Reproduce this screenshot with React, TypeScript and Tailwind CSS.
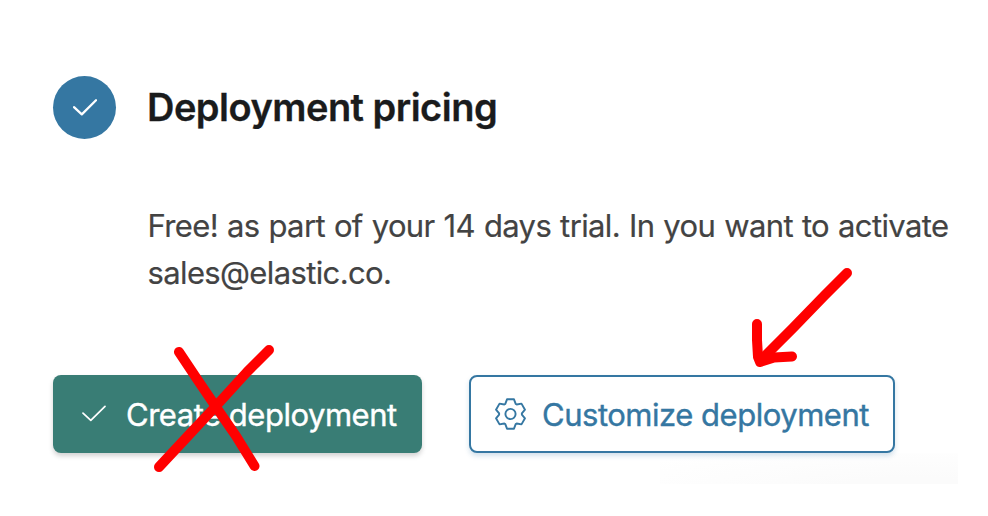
const TOOTH: [number, number][] = [
  [-5.2, -10.1],
  [-3.5, -14.7],
  [3.5, -14.7],
  [5.2, -10.1],
];

const gearPoints = Array.from({ length: 6 }, (_, i) => {
  const a = (i * Math.PI) / 3;
  return TOOTH.map(([x, y]) =>
    [x * Math.cos(a) - y * Math.sin(a), x * Math.sin(a) + y * Math.cos(a)]
      .map((n) => n.toFixed(2))
      .join(","),
  ).join(" ");
}).join(" ");

function GearIcon() {
  return (
    <svg className="h-8 w-8 shrink-0" viewBox="-16.5 -16 32 32" fill="none" stroke="currentColor" strokeWidth="1.9" strokeLinejoin="round">
      <polygon points={gearPoints} />
      <circle r="5.1" />
    </svg>
  );
}

function CheckIcon({ className, weight }: { className: string; weight: number }) {
  return (
    <svg className={className} viewBox="0 0 24 17" fill="none" stroke="currentColor" strokeWidth={weight} strokeLinecap="round" strokeLinejoin="round">
      <path d="M1 8.2 L8.8 15.4 L23 1.3" />
    </svg>
  );
}

function Annotations() {
  return (
    <svg className="pointer-events-none absolute inset-0 h-[516px] w-[988px]" viewBox="0 0 988 516" fill="none" stroke="#ff0000" strokeWidth="10" strokeLinecap="round" strokeLinejoin="round">
      <path d="M179 352 L197 379 L216 407 L236 436 L254.500 466" />
      <path d="M269 350 L247 372 L216 406 L187 437 L159 467" />
      <path d="M847 273 L825 295 L793 328 L763 358" />
      <path d="M757 324 L757 340 L758 357 L760 362 L774 357.500 L792 356.500" />
    </svg>
  );
}

export default function App() {
  return (
    <main className="relative h-[516px] w-[988px] overflow-hidden bg-white pl-[53px] pt-[76px] font-['Inter',sans-serif]">
      <header className="flex h-[63px] items-center gap-[31px]">
        <span className="flex size-[63px] items-center justify-center rounded-full bg-[#3577a2] text-white">
          <CheckIcon className="h-[17px] w-6" weight={2.3} />
        </span>
        <h1 className="mb-0.5 whitespace-nowrap text-[38px] font-semibold leading-[48px] tracking-[-0.52px] text-[#1a1b1c] [-webkit-text-stroke:0.3px_currentColor]">Deployment pricing</h1>
      </header>
      <p className="mt-[63px] whitespace-nowrap pl-[94.500px] text-[31px] leading-[47px] tracking-[-0.63px] text-[#434343] [-webkit-text-stroke:0.2px_currentColor] [word-spacing:0.9px]">
        Free! as part of your 14 days trial. In you want to activate
        <br />
        sales@elastic.co.
      </p>
      <div className="mt-[78.500px] flex gap-[47px]">
        <button className="flex h-[78.500px] w-[369px] items-center rounded-lg bg-[#397d75] pl-[29px] text-white shadow-[0_3px_5px_#0000002e]">
          <CheckIcon className="h-[17px] w-6 shrink-0" weight={1.7} />
          <span className="ml-5 mt-0.5 whitespace-nowrap text-[31px] tracking-[-0.48px] [-webkit-text-stroke:0.4px_currentColor]">Create deployment</span>
        </button>
        <button className="flex h-[78.500px] w-[426px] items-center rounded-lg border-2 border-[#3577a2] bg-white pl-[23px] text-[#3577a2] shadow-[0_3px_5px_#3577a238]">
          <GearIcon />
          <span className="ml-4 mt-0.5 whitespace-nowrap text-[31px] tracking-[-0.48px] [-webkit-text-stroke:0.4px_currentColor]">Customize deployment</span>
        </button>
      </div>
      <div className="ml-[607px] h-[31px] w-[298px] bg-[radial-gradient(ellipse_at_85%_110%,#fbfbfb_20%,#fefefe_75%,#ffffff_90%)]" />
      <Annotations />
    </main>
  );
}
